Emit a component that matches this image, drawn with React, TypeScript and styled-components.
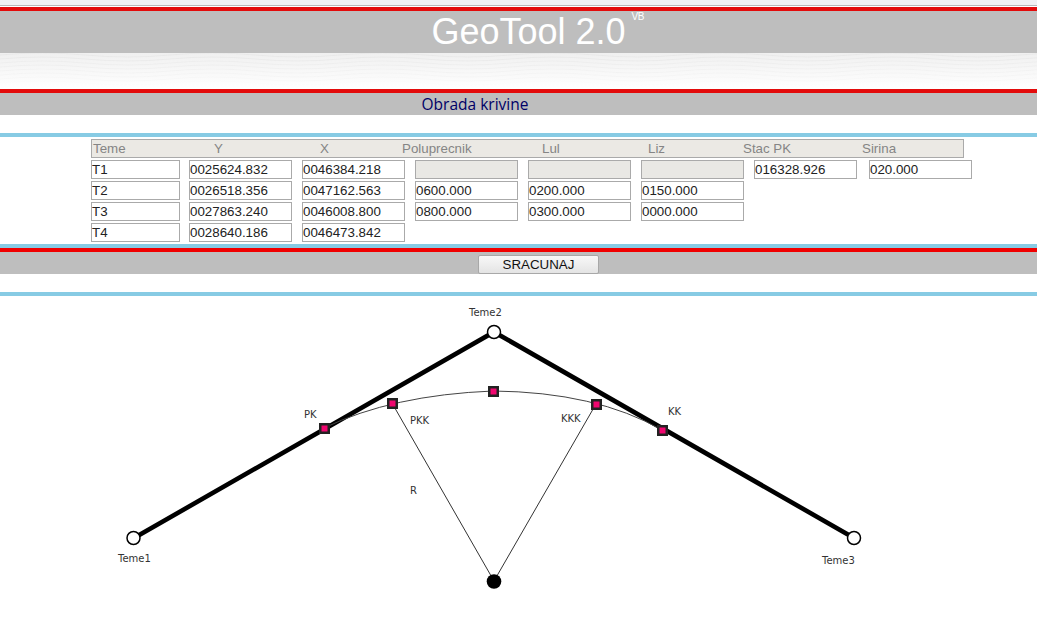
import React from 'react';
import styled, { createGlobalStyle } from 'styled-components';

const GlobalStyle = createGlobalStyle`
  html, body {
    margin: 0;
    padding: 0;
    background: #fff;
    font-family: 'Liberation Sans', Arial, sans-serif;
  }
`;

const Page = styled.div`
  width: 1037px;
  height: 620px;
  overflow: hidden;
`;

const TopStrip = styled.div`
  height: 5px;
  background: #f0f0f3;
  border-bottom: 1px solid #b8b8b8;
  margin-bottom: 1px;
`;

const Rule = styled.div<{ $color: string; $height?: number }>`
  height: ${(p) => p.$height ?? 4}px;
  background: ${(p) => p.$color};
`;

const TitleBar = styled.div`
  height: 42px;
  background: #bebebe;
  display: flex;
  justify-content: center;
  color: #fff;
`;

const Title = styled.h1`
  margin: 0;
  position: relative;
  left: 10px;
  font-size: 36px;
  line-height: 42px;
  font-weight: normal;
`;

const Version = styled.span`
  position: absolute;
  left: 200px;
  top: 1px;
  font-size: 10px;
  line-height: 10px;
  letter-spacing: -0.3px;
`;

const WaveBand = styled.div`
  height: 36px;
  background: linear-gradient(#f0f0f0, #fff);
`;

const WaveLines = styled.svg`
  display: block;
`;

const SubTitleBar = styled.div`
  height: 22px;
  background: #bebebe;
  text-align: center;
  font-family: 'Open Sans', sans-serif;
  font-size: 15.5px;
  line-height: 23px;
  color: #000066;
  padding-right: 87px;
`;

const Spacer = styled.div<{ $height: number }>`
  height: ${(p) => p.$height}px;
`;

const FormArea = styled.div`
  height: 107px;
  padding: 2px 0 0 91px;
  box-sizing: border-box;
`;

const HeaderRow = styled.div`
  width: 873px;
  height: 19px;
  box-sizing: border-box;
  border: 1px solid #aaa;
  background: #ebe9e4;
  position: relative;
  margin-bottom: 2px;
`;

const HeaderCell = styled.span<{ $left: number }>`
  position: absolute;
  left: ${(p) => p.$left}px;
  top: 0;
  font-size: 13.33px;
  line-height: 17px;
  color: #858585;
`;

const Row = styled.div`
  display: grid;
  grid-template-columns: 98px repeat(5, 113px) 115px 103px;
  height: 19px;
  margin-bottom: 2px;
`;

const Field = styled.input<{ $off?: boolean }>`
  box-sizing: border-box;
  width: 103px;
  height: 19px;
  margin: 0;
  padding: 0 0 1px 0;
  border: 1px solid #aaa;
  border-radius: 0;
  outline: none;
  background: ${(p) => (p.$off ? '#e9e8e4' : '#fff')};
  font-family: 'Liberation Sans', Arial, sans-serif;
  font-size: 13.33px;
  color: #222;

  &:first-child {
    width: 89px;
  }
`;

const ActionBar = styled.div`
  height: 22px;
  box-sizing: border-box;
  padding: 3px 0 0 40px;
  background: #bebebe;
  display: flex;
  justify-content: center;
`;

const CalcButton = styled.button`
  width: 121px;
  height: 19px;
  margin: 0;
  padding: 0;
  border: 1px solid #a8a8a8;
  border-radius: 2px;
  background: linear-gradient(#f8f8f8, #e4e4e4);
  font-family: 'Liberation Sans', Arial, sans-serif;
  font-size: 13.33px;
  color: #111;
`;

const Diagram = styled.svg`
  display: block;
`;

const Label = styled.text`
  font-family: 'DejaVu Sans', sans-serif;
  font-size: 10px;
  fill: #333;
`;

const HEADERS: [string, number][] = [
  ['Teme', 1],
  ['Y', 122],
  ['X', 228],
  ['Poluprecnik', 310],
  ['Lul', 450],
  ['Liz', 556],
  ['Stac PK', 651],
  ['Sirina', 770],
];

const ROWS: { id: string; y: string; x: string; r?: string; lul?: string; liz?: string; off?: boolean; st?: string; w?: string }[] = [
  { id: 'T1', y: '0025624.832', x: '0046384.218', off: true, st: '016328.926', w: '020.000' },
  { id: 'T2', y: '0026518.356', x: '0047162.563', r: '0600.000', lul: '0200.000', liz: '0150.000' },
  { id: 'T3', y: '0027863.240', x: '0046008.800', r: '0800.000', lul: '0300.000', liz: '0000.000' },
  { id: 'T4', y: '0028640.186', x: '0046473.842' },
];

const MARKERS: [number, number][] = [
  [324.5, 132.5],
  [392.5, 107.5],
  [493.5, 95.5],
  [596.5, 108.5],
  [662.5, 134.5],
];

const LABELS: [string, number, number][] = [
  ['Teme2', 469, 20],
  ['PK', 304, 122],
  ['PKK', 410, 128],
  ['KKK', 561, 126],
  ['KK', 668, 119],
  ['R', 410, 198],
  ['Teme1', 118, 266],
  ['Teme3', 822, 268],
];

const WAVE_OFFSETS = [2, 6, 10, 14, 18, 22, 26, 30];

const App: React.FC = () => {
  return (
    <Page>
      <GlobalStyle />
      <TopStrip />
      <Rule $color="#e30b0b" />
      <TitleBar>
        <Title>
          GeoTool 2.0<Version>VB</Version>
        </Title>
      </TitleBar>
      <WaveBand>
        <WaveLines width={1037} height={36} viewBox="0 0 1037 36">
          <defs>
            <pattern id="wave" width={170} height={36} patternUnits="userSpaceOnUse">
              {WAVE_OFFSETS.map((y) => (
                <path
                  key={y}
                  d={`M0,${y} Q42,${y - 4} 85,${y} T170,${y}`}
                  fill="none"
                  stroke="#ddd"
                  strokeOpacity={0.4 - y * 0.012}
                  strokeWidth={1}
                />
              ))}
            </pattern>
          </defs>
          <rect width={1037} height={36} fill="url(#wave)" />
        </WaveLines>
      </WaveBand>
      <Rule $color="#e30b0b" />
      <SubTitleBar>Obrada krivine</SubTitleBar>
      <Spacer $height={18} />
      <Rule $color="#87cbe4" />
      <FormArea>
        <HeaderRow>
          {HEADERS.map(([text, left]) => (
            <HeaderCell key={text} $left={left}>
              {text}
            </HeaderCell>
          ))}
        </HeaderRow>
        {ROWS.map((row) => (
          <Row key={row.id}>
            <Field readOnly value={row.id} />
            <Field readOnly value={row.y} />
            <Field readOnly value={row.x} />
            {row.off && <Field readOnly $off value="" />}
            {row.off && <Field readOnly $off value="" />}
            {row.off && <Field readOnly $off value="" />}
            {row.r && <Field readOnly value={row.r} />}
            {row.lul && <Field readOnly value={row.lul} />}
            {row.liz && <Field readOnly value={row.liz} />}
            {row.st && <Field readOnly value={row.st} />}
            {row.w && <Field readOnly value={row.w} />}
          </Row>
        ))}
      </FormArea>
      <Rule $color="#87cbe4" />
      <Rule $color="#f00000" />
      <ActionBar>
        <CalcButton type="button">SRACUNAJ</CalcButton>
      </ActionBar>
      <Spacer $height={18} />
      <Rule $color="#87cbe4" />
      <Diagram width={1037} height={324} viewBox="0 0 1037 324">
        <polyline points="134,242 494,36 854,242" fill="none" stroke="#000" strokeWidth={4.6} />
        <path d="M324,132 Q392,99 493,95 Q596,96 662,134" fill="none" stroke="#444" strokeWidth={1} />
        <polyline points="392,107 494,285 596,108" fill="none" stroke="#333" strokeWidth={1} />
        <circle cx={133.5} cy={242} r={6.5} fill="#fff" stroke="#000" strokeWidth={1.5} />
        <circle cx={494} cy={36} r={6.5} fill="#fff" stroke="#000" strokeWidth={1.5} />
        <circle cx={854} cy={242} r={6.5} fill="#fff" stroke="#000" strokeWidth={1.5} />
        <circle cx={494} cy={285.5} r={7.3} fill="#000" />
        {MARKERS.map(([x, y]) => (
          <rect key={x} x={x - 4.25} y={y - 4.25} width={8.5} height={8.5} fill="#f0066f" stroke="#222" strokeWidth={2.5} />
        ))}
        {LABELS.map(([text, x, y]) => (
          <Label key={text} x={x} y={y}>
            {text}
          </Label>
        ))}
      </Diagram>
    </Page>
  );
};

export default App;
